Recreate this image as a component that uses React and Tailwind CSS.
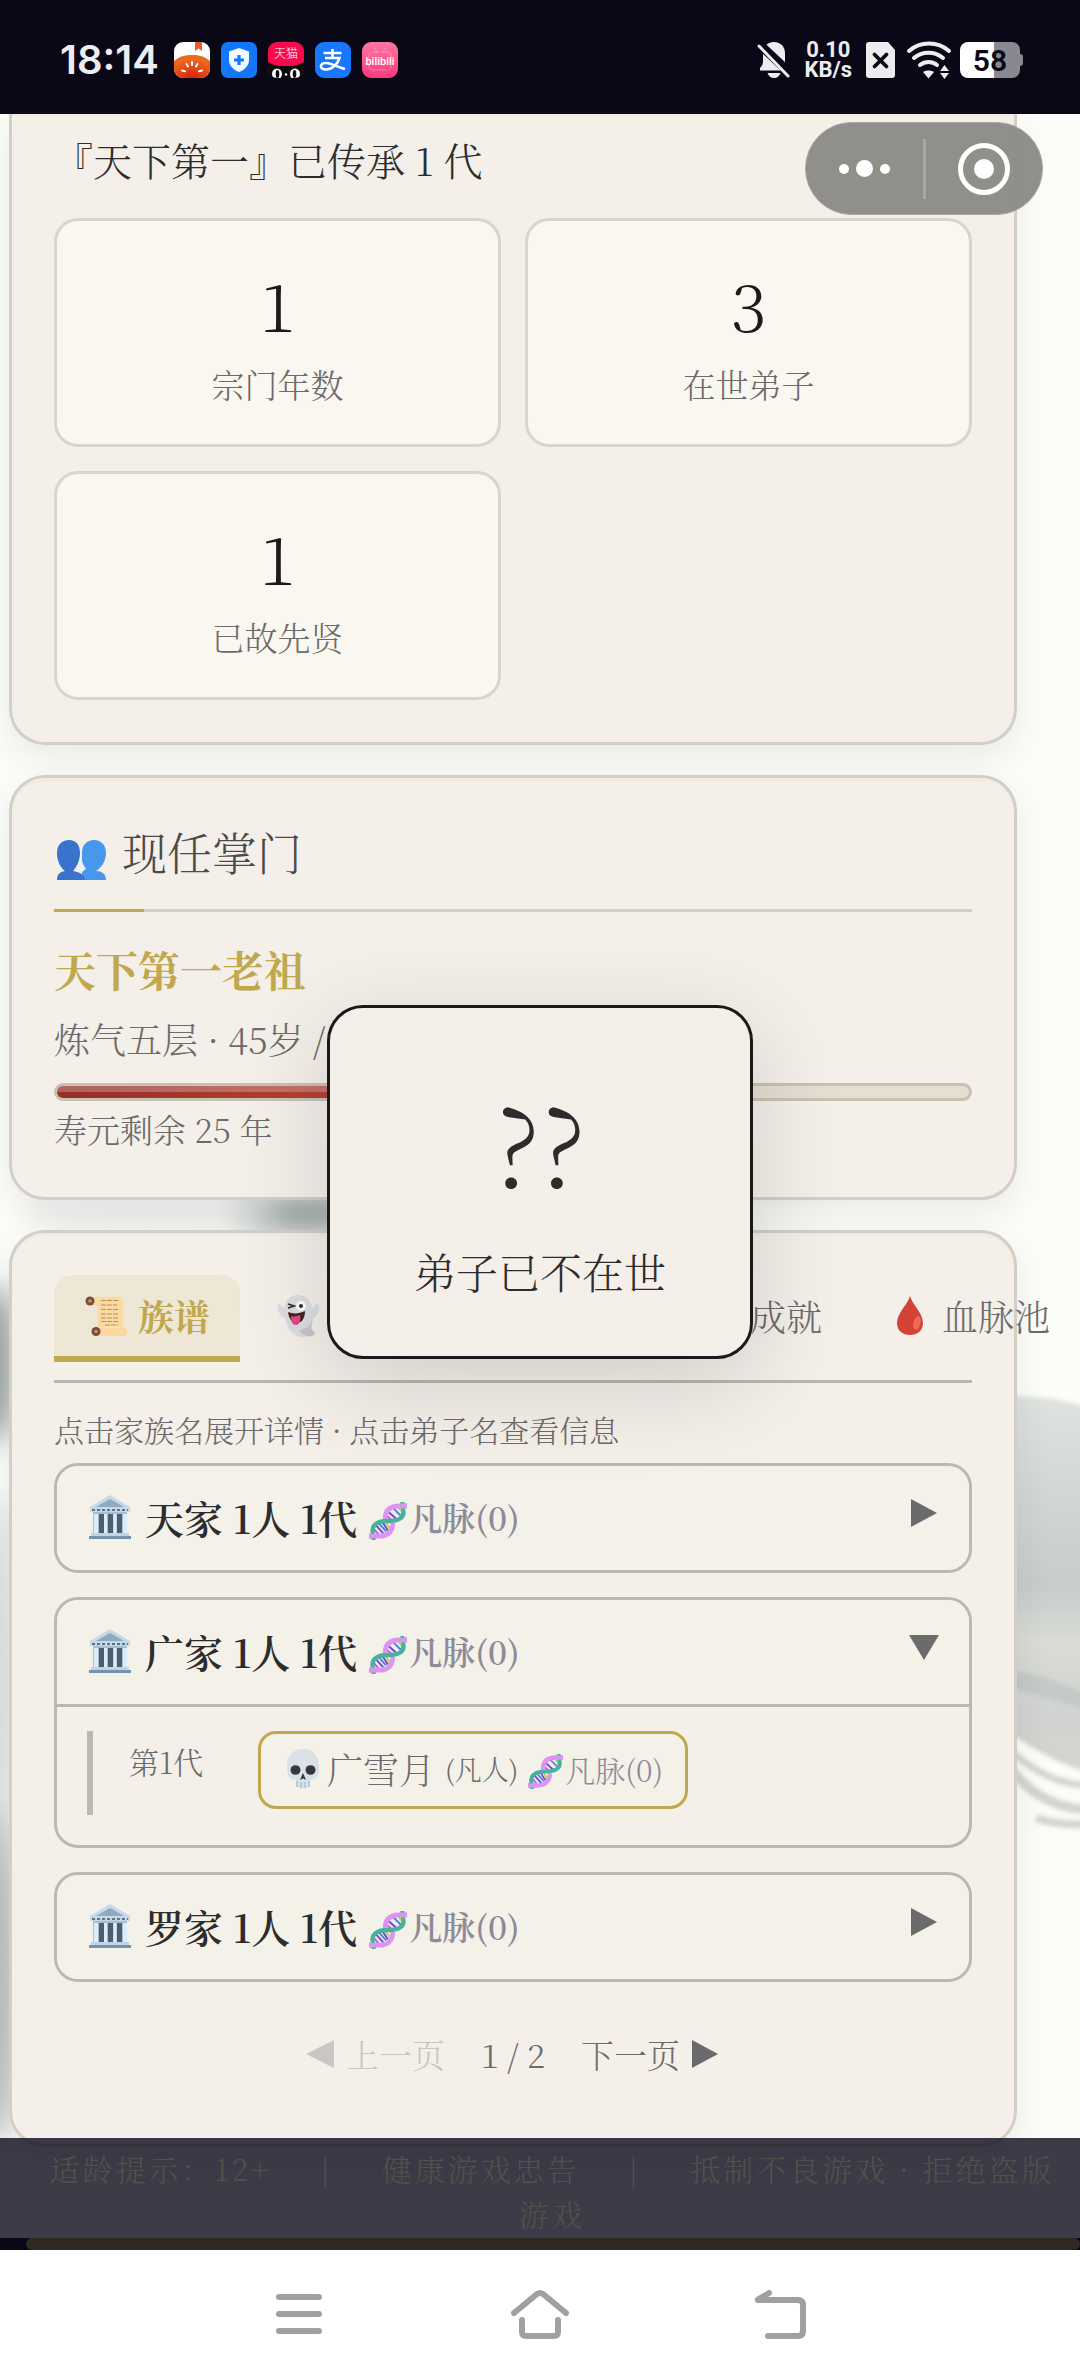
import { useState } from 'react'

const stats = [
  { value: 1, label: '宗门年数' },
  { value: 3, label: '在世弟子' },
  { value: 1, label: '已故先贤' },
]

const initialFamilies = [
  { name: '天家', people: 1, generations: 1, open: false },
  { name: '广家', people: 1, generations: 1, open: true },
  { name: '罗家', people: 1, generations: 1, open: false },
]

/* ---------- status bar icons ---------- */

function TomatoIcon() {
  return (
    <svg viewBox="0 0 36 36" className="size-9" aria-hidden="true">
      <defs>
        <clipPath id="tomato"><rect width="36" height="36" rx="9" /></clipPath>
        <radialGradient id="tomatoFill" cx="0.5" cy="1" r="0.8">
          <stop offset="0" stopColor="#d9200e" />
          <stop offset="1" stopColor="#ea6a1f" />
        </radialGradient>
      </defs>
      <g clipPath="url(#tomato)">
        <rect width="36" height="36" fill="#fff" />
        <path d="M21 0h7v9l-3.500-2.500L21 9z" fill="#ea5a2a" />
        <path d="M0 19C5 14.500 11 13 18 13s13 1.500 18 6v17H0z" fill="url(#tomatoFill)" />
        <g stroke="#fff" strokeWidth="2" strokeLinecap="round">
          <path d="M18 20v3M12.500 22l1.500 2.500M23.500 22L22 24.500M8 28.500l3 .8M28 28.500l-3 .8" />
        </g>
      </g>
    </svg>
  )
}

function ShieldAppIcon() {
  return (
    <svg viewBox="0 0 36 36" className="size-9" aria-hidden="true">
      <rect width="36" height="36" rx="7" fill="#1277fb" />
      <path d="M18 6l10 3.500v9C28 24 23 28 18 30 13 28 8 24 8 18.500v-9z" fill="#f2f8ff" />
      <path d="M18 13v10M13 18h10" stroke="#1277fb" strokeWidth="3.200" />
    </svg>
  )
}

function TmallIcon() {
  return (
    <svg viewBox="0 0 36 36" className="size-9" aria-hidden="true">
      <defs>
        <clipPath id="tmall"><rect width="36" height="36" rx="9" /></clipPath>
      </defs>
      <g clipPath="url(#tmall)">
        <rect width="36" height="36" fill="#f80a4c" />
        <path d="M0 36V20l4 2c3 1 5 2 9 2h10c4 0 6-1 9-2l4-2v16z" fill="#0c0c0c" />
        <ellipse cx="9" cy="32" rx="5" ry="5.500" fill="#fff" />
        <ellipse cx="27" cy="32" rx="5" ry="5.500" fill="#fff" />
        <ellipse cx="9.500" cy="32" rx="1.800" ry="4" fill="#0c0c0c" />
        <ellipse cx="26.500" cy="32" rx="1.800" ry="4" fill="#0c0c0c" />
        <circle cx="18" cy="32.500" r="1.200" fill="#fff" />
      </g>
      <text x="18" y="16" textAnchor="middle" fontSize="12" fill="#fff" className="font-['Noto_Sans_CJK_SC',sans-serif]">天猫</text>
    </svg>
  )
}

function AlipayIcon() {
  return (
    <svg viewBox="0 0 36 36" className="size-9" aria-hidden="true">
      <rect width="36" height="36" rx="9" fill="#1777ff" />
      <path
        d="M8.500 11h18M17.500 7v9M10 16h14.500c-1.500 5-6 11-13 11.500-8 .3-7-7 0-6.500 6 .5 12 4.500 18.500 6"
        fill="none"
        stroke="#fff"
        strokeWidth="2.600"
      />
    </svg>
  )
}

function BiliIcon() {
  return (
    <svg viewBox="0 0 36 36" className="size-9" aria-hidden="true">
      <defs>
        <linearGradient id="bili" x1="0" y1="0" x2="0" y2="1">
          <stop offset="0" stopColor="#fd76a1" />
          <stop offset="1" stopColor="#fb3a7c" />
        </linearGradient>
      </defs>
      <rect width="36" height="36" rx="9" fill="url(#bili)" />
      <path d="M12 6l3 4M24 6l-3 4" stroke="#fff" strokeOpacity="0.150" strokeWidth="2" />
      <rect x="7" y="10" width="22" height="18" rx="4" fill="none" stroke="#fff" strokeOpacity="0.150" strokeWidth="2" />
      <text x="18" y="23" textAnchor="middle" fontSize="11" fontWeight="500" fill="#fff" className="font-[Roboto,sans-serif]">bilibili</text>
    </svg>
  )
}

function BellOffIcon() {
  return (
    <svg viewBox="0 0 34 38" className="h-[38px] w-[34px]" fill="#ededf0" aria-hidden="true">
      <path d="M17 1C10 1 6 6 6 12v8c0 3-1 5-3 7v2.500h28V27c-2-2-3-4-3-7v-8c0-6-4-11-11-11z" />
      <path d="M10.500 32h13c-1 3-3.500 5-6.500 5s-5.500-2-6.500-5z" />
      <path d="M0 1l34 32" stroke="#0a0817" strokeWidth="9" />
      <path d="M2 5l29 30" stroke="#ededf0" strokeWidth="3" strokeLinecap="round" />
    </svg>
  )
}

function SimOffIcon() {
  return (
    <svg viewBox="0 0 30 38" className="h-[38px] w-[30px]" aria-hidden="true">
      <path d="M3 1h19l7 8v25a3 3 0 01-3 3H3a3 3 0 01-3-3V4a3 3 0 013-3z" fill="#ededf0" />
      <path d="M8.500 13.500l12 12M20.500 13.500l-12 12" stroke="#0a0817" strokeWidth="3.800" strokeLinecap="round" />
    </svg>
  )
}

function WifiIcon() {
  return (
    <svg viewBox="0 0 46 38" className="h-[38px] w-[46px]" aria-hidden="true">
      <g fill="none" stroke="#ededf0" strokeWidth="4" strokeLinecap="round">
        <path d="M3 10C14 0 32 0 43 10" />
        <path d="M8 17c8-7 21-7 29 0" />
        <path d="M14 24c5-4 12-4 17 0" />
      </g>
      <path d="M17 31c3-2 8-2 11 0l-5.500 6.500z" fill="#ededf0" />
      <path d="M34 30l4.500-6 4.500 6zM34 32l4.500 6 4.500-6z" fill="#ededf0" />
    </svg>
  )
}

function Battery() {
  return (
    <div className="flex items-center">
      <div className="flex h-9 w-[60px] items-center justify-center rounded-lg bg-linear-to-r from-white from-57% to-[#88888f] to-57% font-[Roboto,sans-serif] text-[30px] font-semibold text-[#0a0817]">
        58
      </div>
      <div className="h-3 w-[3px] rounded-r-sm bg-[#88888f]" />
    </div>
  )
}

function StatusBar() {
  return (
    <header className="flex h-[114px] shrink-0 items-center justify-between bg-[#0a0817] pt-1.5 pr-[57px] pl-[60px] text-[#ededf0]">
      <div className="flex items-center gap-[11px]">
        <span className="mr-1 font-[Inter,sans-serif] text-[40px] font-semibold">18:14</span>
        <TomatoIcon />
        <ShieldAppIcon />
        <TmallIcon />
        <AlipayIcon />
        <BiliIcon />
      </div>
      <div className="flex items-center gap-2">
        <BellOffIcon />
        <div className="mx-1.5 text-center font-[Roboto,sans-serif] text-[22px] leading-5 font-bold">
          0.10<br />KB/s
        </div>
        <div className="mr-0.5"><SimOffIcon /></div>
        <WifiIcon />
        <Battery />
      </div>
    </header>
  )
}

/* ---------- pictograms used inside text ---------- */

function PeopleIcon() {
  return (
    <svg viewBox="0 0 54 48" className="mt-4 h-12 w-[54px]" aria-hidden="true">
      <path d="M40 4c7 0 12 5 12 13 0 9-6 16-10 18 6 0 10 3 10 9H28V17C28 9 33 4 40 4z" fill="#4797ec" />
      <path d="M15 4c7 0 11 5 11 13 0 8-4 15-7 18 7 1 12 4 12 9H3c0-5 2-8 8-9-4-3-8-9-8-18C3 9 8 4 15 4z" fill="#3973cb" />
      <path d="M26 10c2 4 2 12 0 18l-4 6 6 2 4-3c-3-4-5-9-5-15z" fill="#f4efe9" />
    </svg>
  )
}

function ScrollIcon() {
  return (
    <svg viewBox="0 0 44 44" className="size-11" aria-hidden="true">
      <path d="M6 3h31c3 2 2 6 2 10v20H14V12L6 10z" fill="#fad9a2" />
      <path d="M12 34h28c4 0 4 7 0 8H12z" fill="#fbd8a0" />
      <circle cx="6" cy="7" r="4.500" fill="#7a4d38" />
      <circle cx="6" cy="7" r="1.800" fill="#c59472" />
      <circle cx="12" cy="37.500" r="4.500" fill="#7a4d38" />
      <circle cx="12" cy="37.500" r="1.800" fill="#c59472" />
      <path d="M17 6.500h18M17 11h16M17 15.500h18M17 20h18M17 24h17M17 27.500h18M21 31h13" stroke="#b88f61" strokeWidth="1.200" strokeDasharray="5 1" />
    </svg>
  )
}

function GhostIcon() {
  return (
    <svg viewBox="0 0 44 44" className="size-11" aria-hidden="true">
      <path d="M22 1c9 0 13 7 14 13 3 0 3-5 6-4 3 2 0 12-5 14 0 8-4 10 1 13 1 4-6 6-12 6-8 0-15-7-17-19-5-1-9-10-7-14 3-1 4 4 6 4C9 7 14 1 22 1z" fill="#dcdde0" />
      <path d="M35 25c1 7-5 10-12 11 3 5 8 7 13 6 3-1 4-3 1-5-4-3 0-6-2-12z" fill="#c3c5ca" />
      <path d="M12 10l6 2-6 2" fill="none" stroke="#3a3027" strokeWidth="1.800" />
      <circle cx="25" cy="12" r="5" fill="#fff" />
      <circle cx="25" cy="12" r="2" fill="#3a2a20" />
      <path d="M12 18c5 2 11 2 17-1 0 7-3 12-8 12s-8-4-9-11z" fill="#45231d" />
      <path d="M15 22c3 1 6 0 9-1 1 4 0 10-4 10s-5-4-5-9z" fill="#e0478a" />
    </svg>
  )
}

function TrophyIcon() {
  return (
    <svg viewBox="0 0 44 44" className="size-11" aria-hidden="true">
      <path d="M12 4h20v14c0 6-4 10-10 10s-10-4-10-10zM19 28h6v8h-6zM13 36h18v5H13z" fill="#e9b23c" />
      <path d="M12 8H5c0 8 3 12 8 12M32 8h7c0 8-3 12-8 12" fill="none" stroke="#e9b23c" strokeWidth="3" />
    </svg>
  )
}

function DropIcon() {
  return (
    <svg viewBox="0 0 44 44" className="size-11" aria-hidden="true">
      <path d="M22 2c2 8 13 17 13 27 0 8-6 12-13 12S9 37 9 29C9 19 20 10 22 2z" fill="#d54238" />
      <ellipse cx="29" cy="29" rx="3.500" ry="7" transform="rotate(14 29 29)" fill="#ef6a58" />
    </svg>
  )
}

function HallIcon() {
  return (
    <svg viewBox="0 0 46 46" className="size-[46px]" aria-hidden="true">
      <path d="M6 18h34v22H6z" fill="#a7bed3" />
      <path d="M12 20h5v19h-5zM21 20h5v19h-5zM30 20h5v19h-5z" fill="#4d5f6e" />
      <path d="M7 20h4v19H7zM17 20h3v19h-3zM26.500 20h3v19h-3zM36 20h4v19h-4z" fill="#dcecf8" />
      <path d="M23 1l20 12v5H3v-5z" fill="#c3daec" />
      <path d="M23 5l14 8H9z" fill="#91a8bd" />
      <path d="M5 16h36" stroke="#5f7283" strokeWidth="2" strokeDasharray="3 2" />
      <path d="M4 39h38v3H4z" fill="#bcd5e9" />
      <path d="M2 42h42v3H2z" fill="#7691aa" />
    </svg>
  )
}

function DnaIcon({ className }) {
  return (
    <svg viewBox="0 0 40 40" className={className} fill="none" aria-hidden="true">
      <path d="M20 19V9l8-5 8 4-2 9-7 4zM4 32l2-9 8-2 8 2-3 9-8 4z" fill="#f0eaf6" />
      <path d="M20 10l10 9M6 23l9 10M14 21l6 9" stroke="#7146c9" strokeWidth="2" />
      <path d="M25 6l9 9M10 22l8 9" stroke="#4f7fe0" strokeWidth="2" />
      <path d="M18 14l8 7M4 27l6 7" stroke="#c25be0" strokeWidth="2" />
      <path d="M30 5l6 7M18 22l4 6" stroke="#b6d63c" strokeWidth="2" />
      <path d="M40 4h-8C22 4 17 9 17 18" stroke="#dc93f2" strokeWidth="5" />
      <path d="M0 36h11c9 0 14-5 14-14" stroke="#dc93f2" strokeWidth="5" />
      <path d="M5 40l-1-7c-2-9 5-13 16-13s18-3 16-12l-1-8" stroke="#48b39c" strokeWidth="4.500" />
      <path d="M40 4h-7M0 36h7" stroke="#dc93f2" strokeWidth="5" />
    </svg>
  )
}

function SkullIcon() {
  return (
    <svg viewBox="0 0 40 42" className="h-[42px] w-10" aria-hidden="true">
      <path d="M20 1C10 1 4 8 4 18c0 5 0 10 4 13l5 1v6c3 3 11 3 14 0v-6l5-1c4-3 4-8 4-13C36 8 30 1 20 1z" fill="#dae1e7" />
      <path d="M14 33v6M18 34v6M22 34v6M26 33v6" stroke="#9bbfdb" strokeWidth="1.200" />
      <ellipse cx="12.500" cy="22" rx="5" ry="4.800" fill="#35383c" />
      <ellipse cx="27.500" cy="22" rx="5" ry="4.800" fill="#35383c" />
      <path d="M20 25l3 7-3-1.500-3 1.500z" fill="#35383c" />
    </svg>
  )
}

function Triangle({ dir, className }) {
  const d = { right: 'M2 1l26 14L2 29z', left: 'M28 1L0 15l28 14z', down: 'M0 3h30L15 28z' }[dir]
  return (
    <svg viewBox="0 0 30 30" className={className} fill="currentColor" aria-hidden="true">
      <path d={d} />
    </svg>
  )
}

/* ---------- backdrop ---------- */

function InkWash() {
  return (
    <svg viewBox="0 0 1080 2136" preserveAspectRatio="none" className="absolute inset-0 size-full" aria-hidden="true">
      <defs>
        <filter id="soft"><feGaussianBlur stdDeviation="12" /></filter>
        <filter id="edge"><feGaussianBlur stdDeviation="2" /></filter>
        <linearGradient id="ridge" x1="0" y1="0" x2="0" y2="1">
          <stop offset="0" stopColor="#dfe3e0" />
          <stop offset="0.300" stopColor="#d0d5d2" />
          <stop offset="0.500" stopColor="#c6cdca" />
          <stop offset="0.650" stopColor="#dadbd6" />
          <stop offset="0.850" stopColor="#d0d3d0" />
          <stop offset="1" stopColor="#d4d4d0" />
        </linearGradient>
      </defs>
      <rect width="1080" height="2136" fill="#fcfcf9" />
      <g filter="url(#soft)">
        <ellipse cx="290" cy="1100" rx="80" ry="18" fill="#a3aeab" />
        <ellipse cx="150" cy="1100" rx="130" ry="12" fill="#e9ecea" />
        <ellipse cx="-4" cy="1250" rx="18" ry="80" fill="#98a29f" />
        <ellipse cx="-4" cy="1560" rx="18" ry="180" fill="#dadfdb" />
        <ellipse cx="-4" cy="1860" rx="20" ry="170" fill="#b3bbb7" />
      </g>
      <g filter="url(#edge)">
        <path d="M1000 1283q50-4 90 12v364q-44-12-90-48z" fill="url(#ridge)" />
        <path d="M1010 1556q36 4 80 26v14q-40-12-80-22z" fill="#b9c2c1" opacity="0.600" />
        <g stroke="#d4d4cf" fill="none">
          <path d="M1010 1636q36 34 80 36" strokeWidth="7" />
          <path d="M1010 1654q30 40 80 42" strokeWidth="10" />
          <path d="M1036 1704q24 8 54 6" strokeWidth="8" />
        </g>
      </g>
    </svg>
  )
}

/* ---------- panels ---------- */

const panel = 'rounded-[36px] border-[3px] border-[#d2cfc7] bg-[#f4efe9] px-[42px] shadow-[0_12px_36px_rgba(0,0,0,0.08),inset_0_3px_0_#f0ecdf]'

function Capsule() {
  return (
    <div className="absolute top-2 right-[37px] flex h-[93px] w-[238px] items-center rounded-full border border-[#a8a7a3] bg-[#8a8985]/95">
      <button aria-label="更多" className="flex flex-1 items-center justify-center gap-[7px]">
        <span className="size-2.5 rounded-full bg-white" />
        <span className="size-[17px] rounded-full bg-white" />
        <span className="size-2.5 rounded-full bg-white" />
      </button>
      <span className="h-[60px] w-[3px] bg-[#a8a7a2]" />
      <button aria-label="关闭" className="flex flex-1 items-center justify-center">
        <span className="flex size-[52px] items-center justify-center rounded-full border-[5px] border-white">
          <span className="size-5 rounded-full bg-white" />
        </span>
      </button>
    </div>
  )
}

function SectPanel() {
  return (
    <section className={`${panel} rounded-t-none border-t-0 pt-3.5 pb-[42px]`}>
      <p className="mb-7 text-[39px] leading-[62px] text-[#2c2c2c]">『天下第一』已传承 1 代</p>
      <dl className="grid grid-cols-2 gap-6">
        {stats.map((s) => (
          <div key={s.label} className="flex flex-col-reverse items-center rounded-3xl border-[3px] border-[#d8d5cf] bg-[#faf7f0] pt-9 pb-[35px]">
            <dt className="text-[33px] leading-[50px] text-[#6b6b6b]">{s.label}</dt>
            <dd className="pb-2 text-[66px] leading-[94px] text-[#1a1a1a]">{s.value}</dd>
          </div>
        ))}
      </dl>
    </section>
  )
}

function LeaderPanel() {
  return (
    <section className={`${panel} pt-9 pb-10`}>
      <div className="border-b-[3px] border-[#d2cfc7]">
        <h2 className="flex items-center gap-3.5 pb-[19px] text-[45px] leading-[76px] text-[#4a4a4a]">
          <PeopleIcon />
          现任掌门
        </h2>
        <div className="-mb-[3px] h-[3px] w-[90px] bg-[#c0a84f]" />
      </div>
      <p className="mt-6 text-[42px] leading-[66px] font-bold text-[#c0a84f]">天下第一老祖</p>
      <p className="text-[36px] leading-[74px] text-[#6b6b6b]">炼气五层 · 45岁 / 70岁</p>
      <div className="mt-[7px] h-[18px] overflow-hidden rounded-full border-[3px] border-[#c8c2b5] bg-[#e6ded0]">
        <div className="h-full w-2/5 bg-linear-to-r from-[#952f25] to-[#c0473a]">
          <div className="h-1.5 bg-white/25" />
        </div>
      </div>
      <p className="text-[33px] leading-[56px] text-[#6b6b6b]">寿元剩余 25 年</p>
    </section>
  )
}

const tabs = [
  { label: '族谱', Icon: ScrollIcon },
  { label: '先贤', Icon: GhostIcon, iconOnly: true, width: 'w-[186px]' },
  { label: '传承录', Icon: ScrollIcon, iconOnly: true, width: 'w-[222px]' },
  { label: '成就', Icon: TrophyIcon },
  { label: '血脉池', Icon: DropIcon },
]

function Tabs() {
  const [active, setActive] = useState('族谱')
  return (
    <div role="tablist" className="flex gap-1.5 border-b-[3px] border-[#b9b6b0] pb-[18px] text-[36px] leading-[81px]">
      {tabs.map(({ label, Icon, iconOnly, width = '' }) => (
        <button
          key={label}
          role="tab"
          aria-label={label}
          aria-selected={label === active}
          onClick={() => setActive(label)}
          className={
            label === active
              ? `flex shrink-0 items-center gap-[10px] rounded-t-[18px] border-b-[6px] border-[#c0a84f] bg-[#eee7d5] px-[30px] font-bold text-[#c0a84f] ${width}`
              : `flex shrink-0 items-center gap-[10px] border-b-[6px] border-transparent px-[30px] text-[#6b6b6b] ${width}`
          }
        >
          <Icon />
          {!iconOnly && label}
        </button>
      ))}
    </div>
  )
}

function Member() {
  return (
    <div className="border-t-[3px] border-[#bbb8b2] px-[30px] pt-6 pb-[30px]">
      <div className="flex border-l-[6px] border-[#bbb8b2] pb-1.5 pl-9 text-[30px]">
        <span className="mt-1.5 w-[129px] leading-[48px] text-[#6b6b6b]">第1代</span>
        <button className="flex h-[78px] items-center rounded-[18px] border-[3px] border-[#c0a84f] bg-[#f4f1e9] px-[22px] pb-0.5 text-[#6b6b6b]">
          <SkullIcon />
          <span className="ml-1 text-[36px]">广雪月</span>
          <span className="ml-2.5 text-[27px]">(凡人)</span>
          <DnaIcon className="mt-1 mr-0.5 ml-2.5 size-[35px]" />
          <span className="text-[#8d8a99]">凡脉(0)</span>
        </button>
      </div>
    </div>
  )
}

function Family({ family, onToggle }) {
  return (
    <li className="overflow-hidden rounded-3xl border-[3px] border-[#bbb8b2]">
      <button onClick={onToggle} aria-expanded={family.open} className="flex h-[104px] w-full items-center bg-[#f4f1e9] px-[30px] pb-0.5 text-[39px] font-semibold text-[#2c2c2c]">
        <HallIcon />
        <span className="ml-3">{family.name} {family.people}人 {family.generations}代</span>
        <DnaIcon className="mt-2 mr-0.5 ml-3 size-[38px]" />
        <span className="text-[33px] text-[#8d8a99]">凡脉(0)</span>
        <Triangle dir={family.open ? 'down' : 'right'} className="mb-2 ml-auto size-[30px] text-[#6b6b6b]" />
      </button>
      {family.open && <Member />}
    </li>
  )
}

function GenealogyPanel() {
  const [families, setFamilies] = useState(initialFamilies)
  const toggle = (name) => setFamilies(families.map((f) => (f.name === name ? { ...f, open: !f.open } : f)))

  return (
    <section className={`${panel} pt-[42px] pb-[60px]`}>
      <Tabs />
      <p className="mt-[23px] mb-2.5 text-[30px] leading-[47px] text-[#6b6b6b]">点击家族名展开详情 · 点击弟子名查看信息</p>
      <ul className="flex flex-col gap-6">
        {families.map((f) => (
          <Family key={f.name} family={f} onToggle={() => toggle(f.name)} />
        ))}
      </ul>
      <nav className="mt-[42px] flex h-[60px] items-center justify-center gap-9 text-[33px] text-[#6b6b6b]">
        <button disabled className="flex items-center gap-2.5 text-[#c8c7c1]">
          <Triangle dir="left" className="size-[30px]" />
          上一页
        </button>
        <span>1 / 2</span>
        <button className="flex items-center gap-2.5">
          下一页
          <Triangle dir="right" className="size-[30px]" />
        </button>
      </nav>
    </section>
  )
}

function Notice() {
  return (
    <div role="alert" className="absolute top-1/2 left-1/2 flex w-[426px] -translate-1/2 flex-col items-center rounded-[36px] border-[3px] border-[#1a1a1a] bg-[#f4efe9] pt-[69px] pb-[45px] text-[#2c2c2c] shadow-[0_24px_96px_rgba(0,0,0,0.15)]">
      <span className="text-[108px] leading-[130px]">??</span>
      <span className="mt-6 text-[42px] leading-[80px]">弟子已不在世</span>
    </div>
  )
}

function LegalFooter() {
  return (
    <footer className="absolute inset-x-0 bottom-0">
      <div className="h-[100px] bg-[#0c0a1a]/80 pt-2 pr-3 pl-9 text-center text-[30px] leading-[45px] tracking-widest text-[#53504b]">
        <span>适龄提示：12+</span>
        <span className="mx-[49px]">|</span>
        <span>健康游戏忠告</span>
        <span className="mx-[49px]">|</span>
        <span>抵制不良游戏 · 拒绝盗版</span>
        <span className="inline-block">游戏</span>
      </div>
      <div className="bg-[#0a0817] pl-[26px]">
        <div className="h-3 rounded-md bg-[#2f2921]" />
      </div>
    </footer>
  )
}

function SystemNav() {
  return (
    <nav className="flex h-[126px] shrink-0 items-center justify-center gap-[180px] bg-white pt-px">
      {[
        ['菜单', 'M9 13h40M9 30h40M9 47h40'],
        ['主页', 'M4 29L27 10q3-2 6 0l23 19M12 36v12q0 4 4 4h28q4 0 4-4V36'],
        ['返回', 'M19 9L8 15.500M8 16h40q5 0 5 5v26q0 5-5 5H18'],
      ].map(([label, d]) => (
        <button key={label} aria-label={label}>
          <svg viewBox="0 0 60 60" className="size-[60px]" fill="none" stroke="#a0a0a0" strokeWidth="6" strokeLinecap="round" strokeLinejoin="round" aria-hidden="true">
            <path d={d} />
          </svg>
        </button>
      ))}
    </nav>
  )
}

export default function App() {
  return (
    <div className="flex h-screen flex-col overflow-hidden font-['Noto_Serif_CJK_SC','Liberation_Serif','Noto_Sans_CJK_SC',serif] font-light">
      <StatusBar />
      <div className="relative min-h-0 flex-1 overflow-hidden">
        <InkWash />
        <main className="relative mr-[63px] ml-[9px] flex flex-col gap-[30px]">
          <SectPanel />
          <LeaderPanel />
          <GenealogyPanel />
        </main>
        <LegalFooter />
        <Capsule />
        <Notice />
      </div>
      <SystemNav />
    </div>
  )
}
